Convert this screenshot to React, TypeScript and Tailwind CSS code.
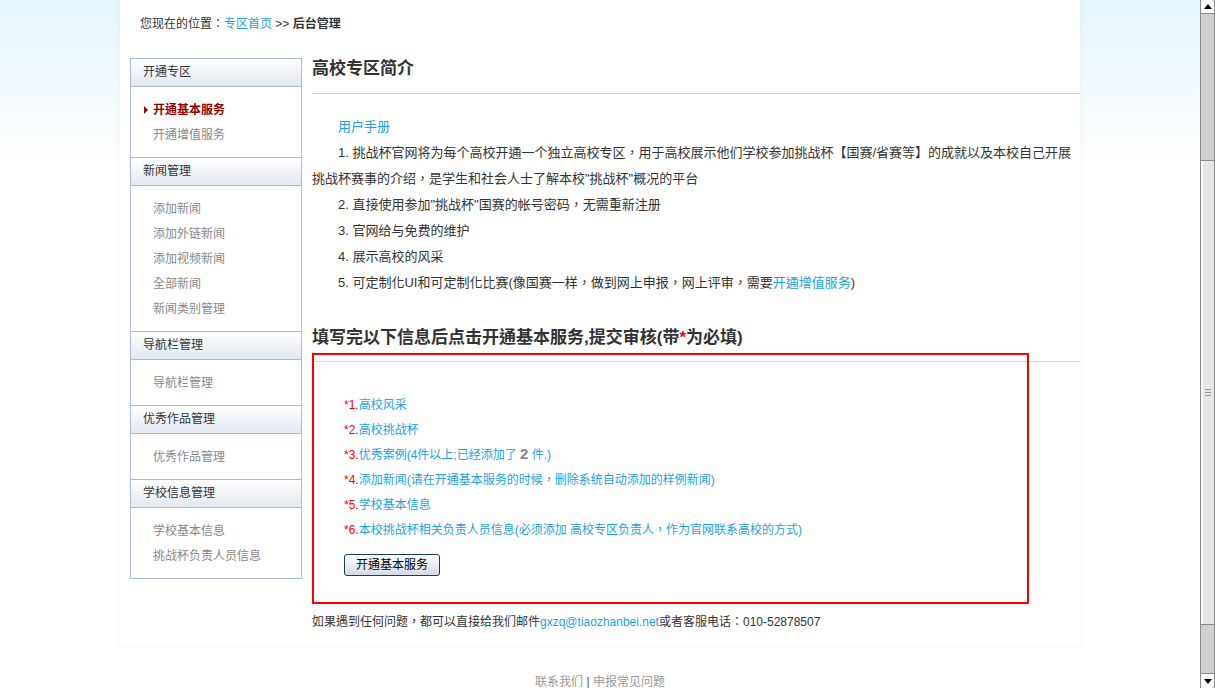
import React from "react"

const sections = [
  { title: "开通专区", items: ["开通基本服务", "开通增值服务"], active: 0 },
  { title: "新闻管理", items: ["添加新闻", "添加外链新闻", "添加视频新闻", "全部新闻", "新闻类别管理"] },
  { title: "导航栏管理", items: ["导航栏管理"] },
  { title: "优秀作品管理", items: ["优秀作品管理"] },
  { title: "学校信息管理", items: ["学校基本信息", "挑战杯负责人员信息"] },
]

const steps: React.ReactNode[] = [
  "高校风采",
  "高校挑战杯",
  <>
    优秀案例(4件以上;已经添加了 <span className="text-[15px] font-bold leading-none text-[#888]">2</span> 件.)
  </>,
  "添加新闻(请在开通基本服务的时候，删除系统自动添加的样例新闻)",
  "学校基本信息",
  "本校挑战杯相关负责人员信息(必须添加 高校专区负责人，作为官网联系高校的方式)",
]

function Sidebar() {
  return (
    <div className="w-[172px] shrink-0 self-start border border-[#aabbd5] bg-white">
      {sections.map((s, i) => (
        <div key={s.title}>
          <div
            className={
              "border-b border-[#aabbd5] bg-gradient-to-b from-white to-[#e3e8f1] pl-[12px] text-[12px] leading-[27px] text-[#333] " +
              (i > 0 ? "h-[29px] border-t" : "h-[28px]")
            }
          >
            {s.title}
          </div>
          <ul className="py-[10px]">
            {s.items.map((it, j) => (
              <li key={it} className="relative flex h-[25px] items-center pl-[22px] text-[12px]">
                {s.active === j ? (
                  <>
                    <span className="absolute left-[13px] top-[9px] h-0 w-0 border-y-[4px] border-l-[4px] border-y-transparent border-l-[#990000]" />
                    <span className="font-bold text-[#990000]">{it}</span>
                  </>
                ) : (
                  <span className="text-[#888]">{it}</span>
                )}
              </li>
            ))}
          </ul>
        </div>
      ))}
    </div>
  )
}

function Scrollbar() {
  return (
    <div className="flex h-[688px] w-[15px] shrink-0 flex-col border-x border-[#8a8a8a] bg-[#d0d0d0]">
      <div className="flex h-[14px] items-center justify-center rounded-t-[3px] border-b border-[#8a8a8a] bg-white">
        <span className="h-0 w-0 border-x-[4px] border-b-[5px] border-x-transparent border-b-black" />
      </div>
      <div className="h-[146px]" />
      <div className="flex h-[465px] items-center justify-center border-y border-[#8a8a8a] bg-[#e6e6e6] shadow-[inset_2px_0_0_#f6f6f6]">
        <div className="flex flex-col gap-[2px]">
          <span className="h-px w-[6px] bg-[#999]" />
          <span className="h-px w-[6px] bg-[#999]" />
          <span className="h-px w-[6px] bg-[#999]" />
        </div>
      </div>
      <div className="flex-1" />
      <div className="flex h-[15px] items-center justify-center rounded-b-[3px] border-t border-[#8a8a8a] bg-white">
        <span className="h-0 w-0 border-x-[4px] border-t-[5px] border-x-transparent border-t-black" />
      </div>
    </div>
  )
}

export default function App() {
  return (
    <div className="flex h-[688px] w-[1215px] overflow-hidden font-[family-name:'Liberation_Sans','Noto_Sans_CJK_TC',sans-serif] text-[#333]">
      <div className="flex-1 bg-gradient-to-b from-[#e6f6fd] via-white via-[25%] to-white">
        <div className="mx-auto w-[960px] bg-white pb-[15px] pl-[10px] shadow-[0_0_6px_rgba(0,0,0,0.06)]">
          <div className="pl-[10px] pt-[15px] text-[12px] leading-[18px]">
            您现在的位置：<span className="text-[#1e9fe3]">专区首页</span> &gt;&gt; <b>后台管理</b>
          </div>
          <div className="mt-[25px] flex gap-[10px]">
            <Sidebar />
            <div className="w-[768px]">
              <h2 className="h-[36px] border-b border-[#d8d8d8] text-[17px] font-bold leading-[22px] text-[#333]">
                高校专区简介
              </h2>
              <div className="pt-[20px] text-[13px] leading-[26px]">
                <p className="indent-[26px] text-[#1e9fe3]">用户手册</p>
                <p className="indent-[26px]">
                  1. 挑战杯官网将为每个高校开通一个独立高校专区，用于高校展示他们学校参加挑战杯【国赛/省赛等】的成就以及本校自己开展
                  <br />
                  挑战杯赛事的介绍，是学生和社会人士了解本校"挑战杯"概况的平台
                </p>
                <p className="indent-[26px]">2. 直接使用参加"挑战杯"国赛的帐号密码，无需重新注册</p>
                <p className="indent-[26px]">3. 官网给与免费的维护</p>
                <p className="indent-[26px]">4. 展示高校的风采</p>
                <p className="indent-[26px]">
                  5. 可定制化UI和可定制化比赛(像国赛一样，做到网上申报，网上评审，需要
                  <span className="text-[#1e9fe3]">开通增值服务</span>)
                </p>
              </div>
              <h2 className="mt-[31px] h-[35px] border-b border-[#d8d8d8] text-[17px] font-bold leading-[22px] text-[#333]">
                填写完以下信息后点击开通基本服务,提交审核(带<span className="text-[#ff0000]">*</span>为必填)
              </h2>
              <div className="-mt-[9px] w-[717px] border-2 border-[#ff0000] pb-[26px] pl-[30px] pt-[38px]">
                {steps.map((s, i) => (
                  <div key={i} className="h-[25px] text-[12px] leading-[25px] text-[#1e9fe3]">
                    <span className="text-[#ff0000]">*{i + 1}.</span>
                    {s}
                  </div>
                ))}
                <button className="mt-[11px] block h-[22px] w-[96px] rounded-[3px] border border-[#1c3a68] bg-gradient-to-b from-white to-[#d6dae6] text-[12px] text-black">
                  开通基本服务
                </button>
              </div>
              <div className="mt-[9px] text-[12px] leading-[18px]">
                如果遇到任何问题，都可以直接给我们邮件<span className="text-[#1e9fe3]">gxzq@tiaozhanbei.net</span>或者客服电话：010-52878507
              </div>
            </div>
          </div>
        </div>
        <div className="mt-[27px] text-center text-[12px] leading-[18px] text-[#999]">
          联系我们 <span className="text-[#555]">|</span> 申报常见问题
        </div>
      </div>
      <Scrollbar />
    </div>
  )
}
